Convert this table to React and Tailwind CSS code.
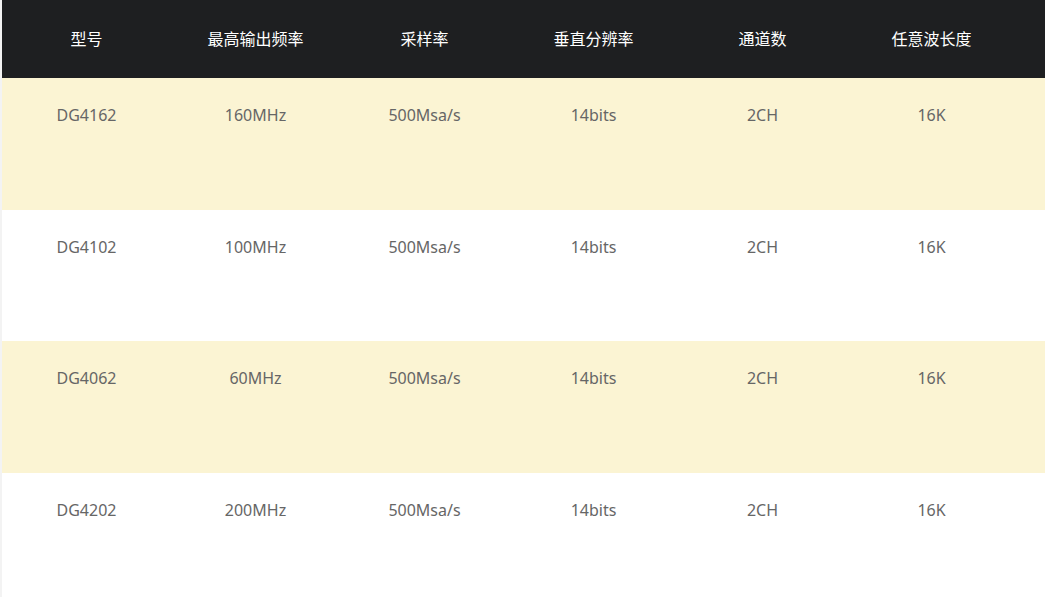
import React from 'react';

const headers = ['型号', '最高输出频率', '采样率', '垂直分辨率', '通道数', '任意波长度'];

const rows = [
    ['DG4162', '160MHz', '500Msa/s', '14bits', '2CH', '16K'],
    ['DG4102', '100MHz', '500Msa/s', '14bits', '2CH', '16K'],
    ['DG4062', '60MHz', '500Msa/s', '14bits', '2CH', '16K'],
    ['DG4202', '200MHz', '500Msa/s', '14bits', '2CH', '16K'],
];

const App = () => {
    return (
        <div
            className="w-[1045px] h-[597px] overflow-hidden bg-white border-l-2 border-[#f3f3f3]"
            style={{ fontFamily: '"Noto Sans", "Noto Sans CJK SC", sans-serif' }}
        >
            {/* Header */}
            <div className="h-[78px] bg-[#1e1f21] grid grid-cols-[repeat(6,169px)] items-center">
                {headers.map((h) => (
                    <div key={h} className="text-center text-white text-[16px] leading-[20px]">
                        {h}
                    </div>
                ))}
            </div>

            {/* Rows */}
            {rows.map((row, i) => (
                <div
                    key={row[0]}
                    className={`h-[131.5px] grid grid-cols-[repeat(6,169px)] items-start pt-[27px] ${i % 2 === 0 ? 'bg-[#fbf4d3]' : 'bg-white'}`}
                >
                    {row.map((cell, j) => (
                        <div key={j} className="text-center text-[#666666] text-[16px] leading-[21px]">
                            {cell}
                        </div>
                    ))}
                </div>
            ))}
        </div>
    );
};

export default App;
